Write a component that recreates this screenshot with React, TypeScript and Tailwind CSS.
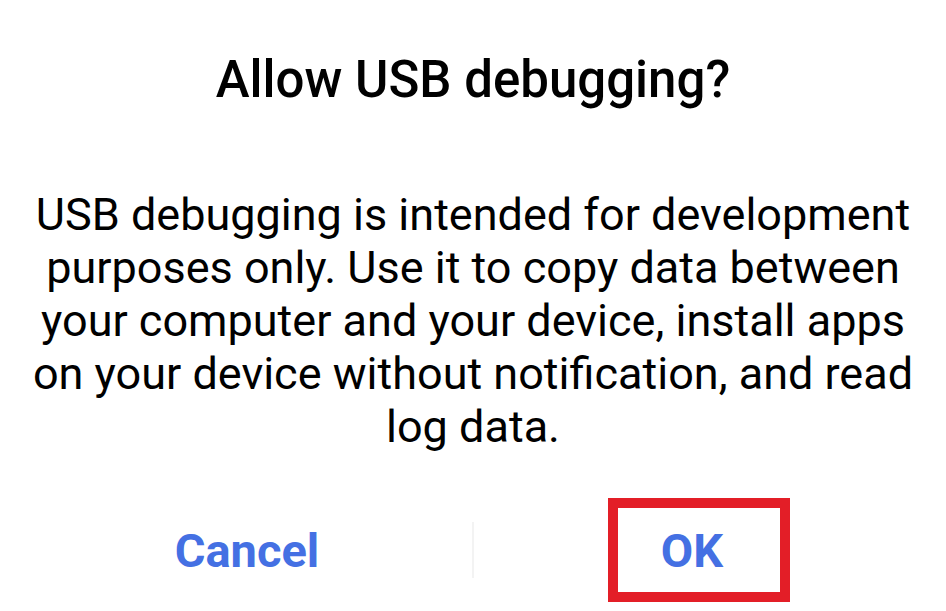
import React from "react";

export default function App() {
  const lines = [
    "USB debugging is intended for development",
    "purposes only. Use it to copy data between",
    "your computer and your device, install apps",
    "on your device without notification, and read",
    "log data.",
  ];
  return (
    <div
      className="w-[946px] h-[611px] bg-white flex flex-col overflow-hidden"
      style={{ fontFamily: "Roboto, 'Noto Sans', sans-serif" }}
    >
      <h1 className="pt-[50px] text-center text-[51px] leading-[60px] font-medium text-black whitespace-nowrap">
        Allow USB debugging?
      </h1>
      <div className="mt-[78px] flex flex-col items-center text-[45px] leading-[53px] text-black">
        {lines.map((l) => (
          <div key={l} className="whitespace-nowrap">
            {l}
          </div>
        ))}
      </div>
      <div className="mt-[45px] h-[104px] flex items-center px-[22px]">
        <div className="flex-1 flex items-center justify-center text-[47px] leading-[47px] font-bold text-[#4470e3]">
          Cancel
        </div>
        <div className="w-[2px] h-[56px] bg-[#f3f3f3]"></div>
        <div className="flex-1 flex items-center justify-center">
          <div className="w-[182px] h-[104px] border-[10px] border-[#e31e27] flex items-center justify-center pr-[14px] text-[47px] leading-[47px] font-bold text-[#4470e3]">
            OK
          </div>
        </div>
      </div>
    </div>
  );
}
